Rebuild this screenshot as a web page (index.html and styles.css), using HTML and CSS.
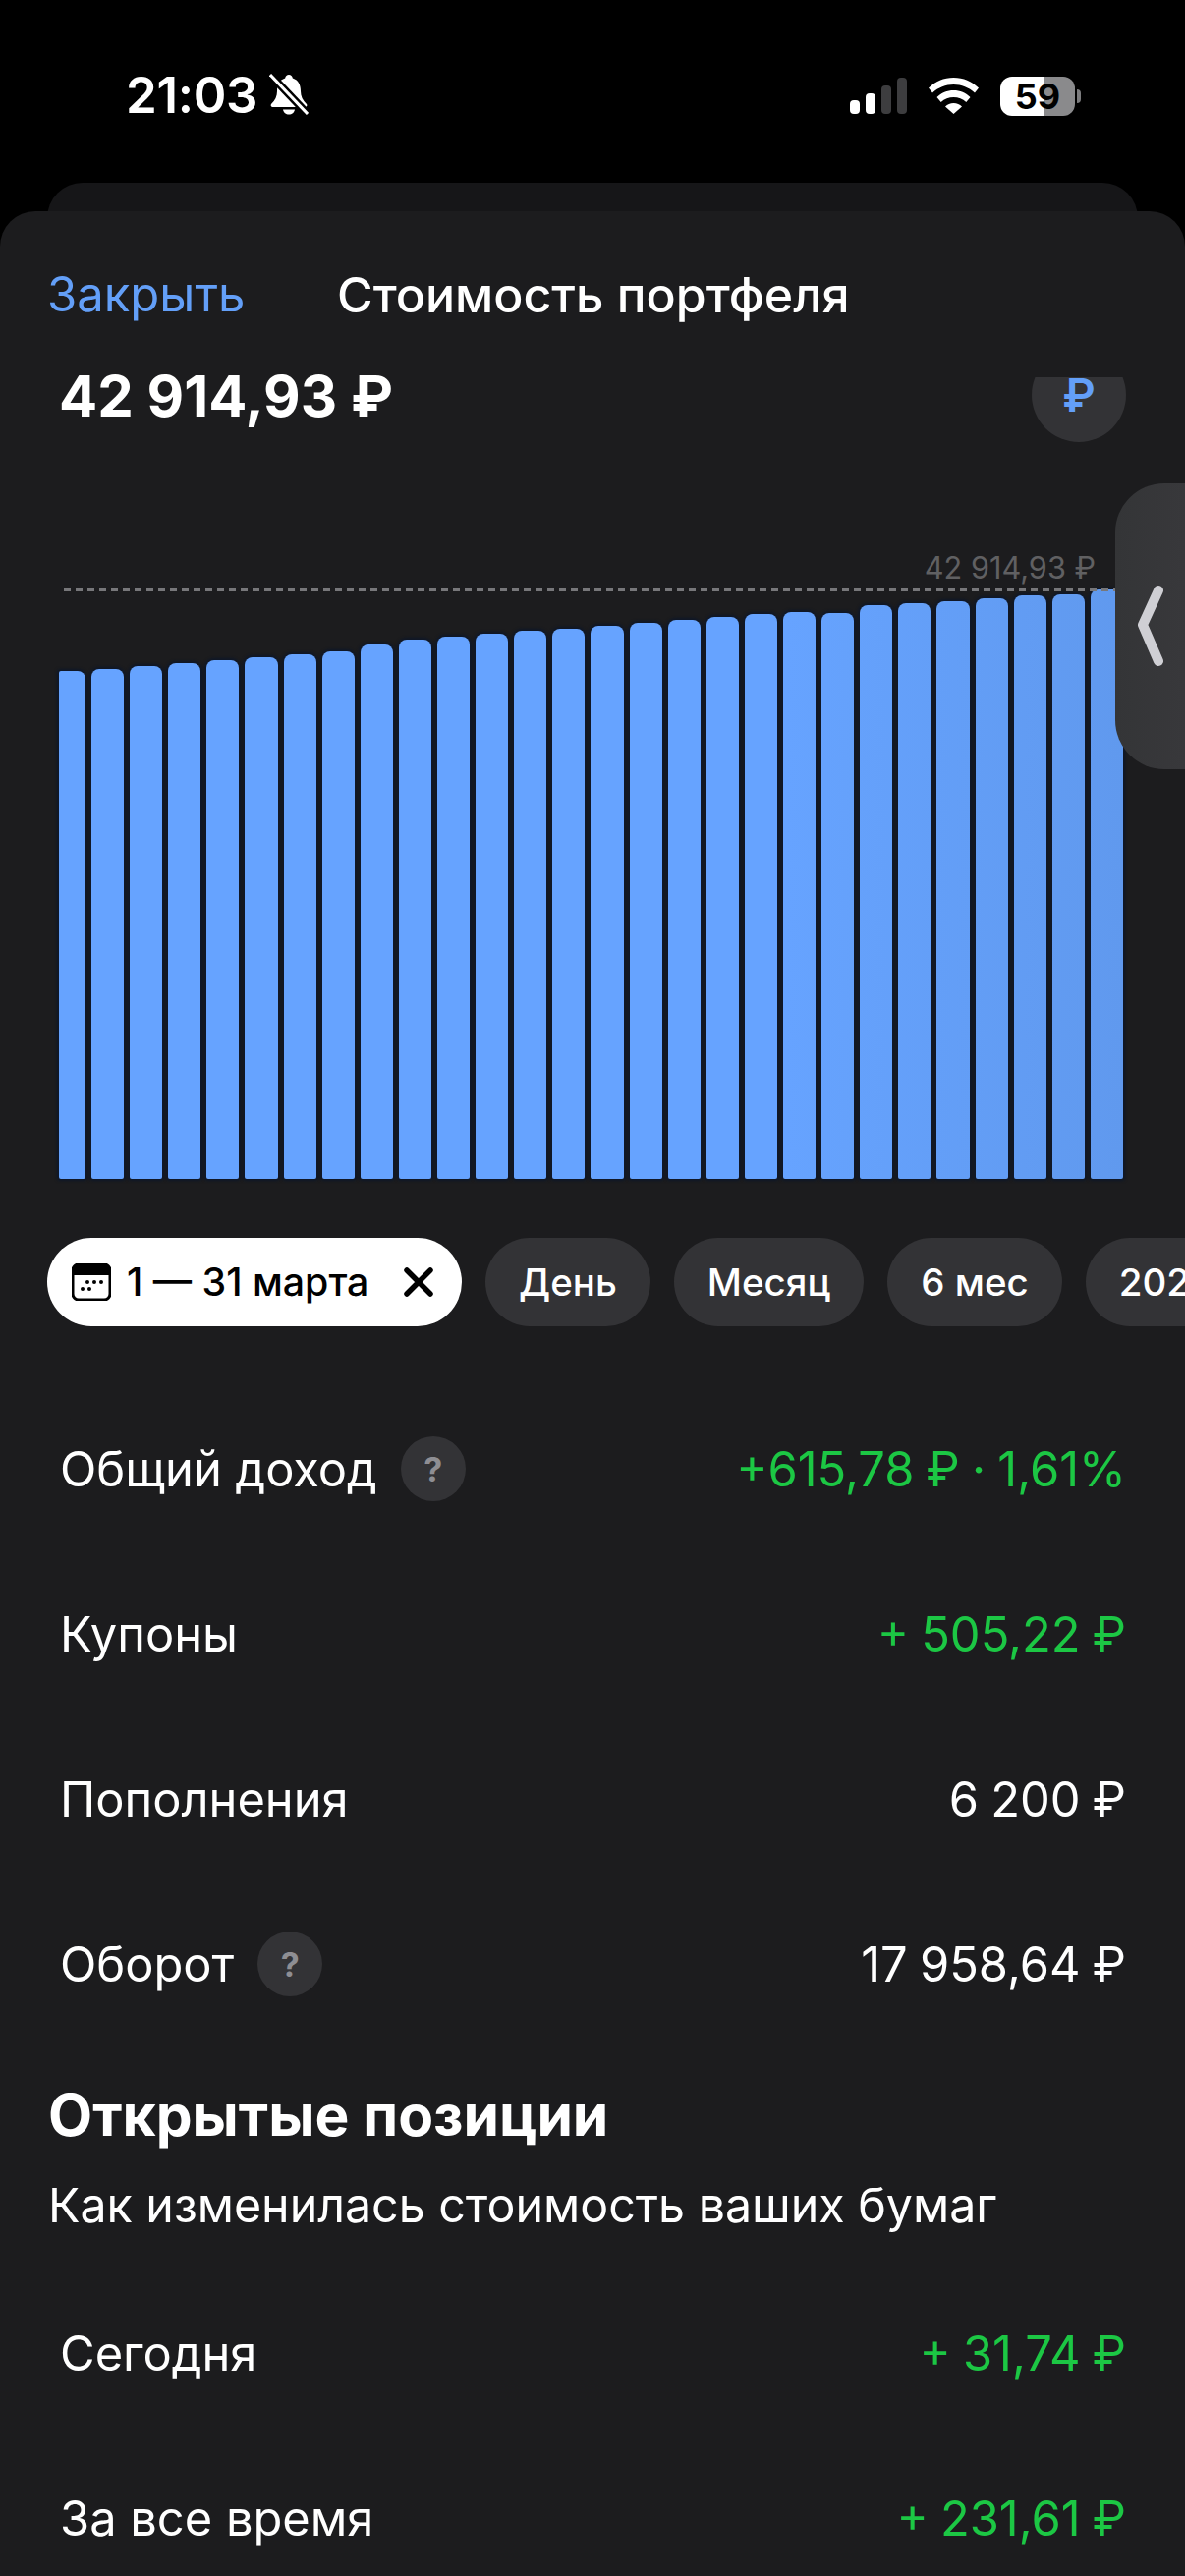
FILE: index.html
```html
<!DOCTYPE html>
<html lang="ru">
<head>
<meta charset="utf-8">
<title>Стоимость портфеля</title>
<link rel="stylesheet" href="styles.css">
</head>
<body>
<div class="phone">
  <div class="status">
    <div class="status-left">
      <span class="clock">21:03</span>
      <svg class="bell" viewBox="0 0 40 42"><path d="M20 1c-2 0-3.500 1.500-3.800 3.500C10 6.500 8 12 8 18c0 5-2 9-6 13-1 1.500 0 3 1.500 3h33c1.500 0 2.500-1.500 1.500-3-4-4-6-8-6-13 0-6-2-11.500-8.200-13.500C23.500 2.500 22 1 20 1z" fill="#fff"/><path d="M14 36.500h12c-.5 3-3 5-6 5s-5.500-2-6-5z" fill="#fff"/><path d="M1 1l38 40" stroke="#000" stroke-width="8"/><path d="M1 1l38 40" stroke="#fff" stroke-width="3"/></svg>
    </div>
    <div class="status-right">
      <div class="signal">
        <i class="sig s1"></i><i class="sig s2"></i><i class="sig s3"></i><i class="sig s4"></i>
      </div>
      <svg class="wifi" viewBox="0 0 51 37"><path d="M25.500 0C15.500 0 7 4 0 10.500l4 5C10 10 17.500 7 25.500 7s15.500 3 21.500 8.500l4-5C44 4 35.500 0 25.500 0z" fill="#fff"/><path d="M25.500 13c-6.500 0-12.500 2.500-17 7l4.200 5c3.500-3.300 8-5 12.800-5s9.300 1.700 12.800 5l4.200-5c-4.500-4.500-10.500-7-17-7z" fill="#fff"/><path d="M25.500 26c-3.300 0-6.300 1.300-8.500 3.500l8.500 7.500 8.500-7.500C31.800 27.300 28.800 26 25.500 26z" fill="#fff"/></svg>
      <div class="battery"><div class="battery-body"><span class="battery-text">59</span></div><i class="battery-nub"></i></div>
    </div>
  </div>

  <div class="sheet-back"></div>
  <div class="sheet">
    <header class="head">
      <span class="close">Закрыть</span>
      <span class="head-title">Стоимость портфеля</span>
    </header>
    <div class="scroll">
      <div class="total-row">
        <span class="total">42 914,93 ₽</span>
        <span class="currency-clip"><span class="currency">₽</span></span>
      </div>
      <div class="chart">
        <div class="max-label">42 914,93 ₽</div>
        <div class="max-line"></div>
        <div class="bars">
          <i class="bar" style="height:517px"></i><i class="bar" style="height:519px"></i><i class="bar" style="height:522px"></i><i class="bar" style="height:525px"></i><i class="bar" style="height:528px"></i><i class="bar" style="height:531px"></i><i class="bar" style="height:534px"></i><i class="bar" style="height:537px"></i><i class="bar" style="height:544px"></i><i class="bar" style="height:549px"></i><i class="bar" style="height:552px"></i><i class="bar" style="height:555px"></i><i class="bar" style="height:558px"></i><i class="bar" style="height:560px"></i><i class="bar" style="height:563px"></i><i class="bar" style="height:566px"></i><i class="bar" style="height:569px"></i><i class="bar" style="height:572px"></i><i class="bar" style="height:575px"></i><i class="bar" style="height:577px"></i><i class="bar" style="height:576px"></i><i class="bar" style="height:584px"></i><i class="bar" style="height:586px"></i><i class="bar" style="height:588px"></i><i class="bar" style="height:591px"></i><i class="bar" style="height:594px"></i><i class="bar" style="height:595px"></i><i class="bar" style="height:600px"></i>
        </div>
      </div>
      <div class="chips">
        <div class="chip chip-active">
          <svg class="cal" viewBox="0 0 40 38"><path d="M7 1h26a6 6 0 0 1 6 6v24a6 6 0 0 1-6 6H7a6 6 0 0 1-6-6V7a6 6 0 0 1 6-6z" fill="none" stroke="#000" stroke-width="3"/><path d="M7 1h26a6 6 0 0 1 6 6v5H1V7a6 6 0 0 1 6-6z" fill="#000"/><g fill="#000"><circle cx="16" cy="19" r="2"/><circle cx="23" cy="19" r="2"/><circle cx="30" cy="19" r="2"/><circle cx="11" cy="26" r="2"/><circle cx="18" cy="26" r="2"/></g></svg>
          <span class="chip-date">1 — 31 марта</span>
          <svg class="cross" viewBox="0 0 30 30"><path d="M3 3l24 24M27 3L3 27" stroke="#000" stroke-width="5.500" stroke-linecap="round"/></svg>
        </div>
        <div class="chip">День</div>
        <div class="chip">Месяц</div>
        <div class="chip">6 мес</div>
        <div class="chip">2024</div>
      </div>
      <div class="rows">
        <div class="row"><span class="label">Общий доход<i class="help">?</i></span><span class="val green">+615,78 ₽ · 1,61%</span></div>
        <div class="row"><span class="label">Купоны</span><span class="val green">+ 505,22 ₽</span></div>
        <div class="row"><span class="label">Пополнения</span><span class="val">6 200 ₽</span></div>
        <div class="row"><span class="label">Оборот<i class="help">?</i></span><span class="val">17 958,64 ₽</span></div>
      </div>
      <section class="positions">
        <h2 class="pos-title">Открытые позиции</h2>
        <p class="pos-sub">Как изменилась стоимость ваших бумаг</p>
      </section>
      <div class="rows rows-second">
        <div class="row"><span class="label">Сегодня</span><span class="val green">+ 31,74 ₽</span></div>
        <div class="row"><span class="label">За все время</span><span class="val green">+ 231,61 ₽</span></div>
      </div>
    </div>
    <div class="handle">
      <svg class="chevron" viewBox="0 0 28 84"><path d="M22 6L6 41l16 37" fill="none" stroke="#cfcfd4" stroke-width="10" stroke-linecap="round" stroke-linejoin="round"/></svg>
    </div>
  </div>
</div>
</body>
</html>
```

FILE: styles.css
```css
* { box-sizing: border-box; }
html, body { margin: 0; padding: 0; background: #000; }
body { font-family: Inter, "Noto Sans", "Liberation Sans", sans-serif; color: #fff; }
.phone { width: 1206px; height: 2622px; overflow: hidden; background: #000; display: flex; flex-direction: column; }

.status { height: 186px; flex: none; display: flex; justify-content: space-between; padding: 72px 106px 0 128px; align-items: flex-start; }
.status-left { display: flex; align-items: center; gap: 12px; height: 50px; }
.clock { font-size: 51px; font-weight: 600; line-height: 50px; letter-spacing: -0.3px; }
.bell { width: 40px; height: 42px; margin-top: -2px; }
.status-right { display: flex; align-items: flex-end; height: 46px; }
.signal { display: flex; align-items: flex-end; gap: 6px; height: 37px; margin-bottom: 2px; }
.sig { display: block; width: 10px; border-radius: 4px; background: #fff; }
.s1 { height: 14px; }
.s2 { height: 21px; }
.s3 { height: 29px; background: #3d3d3f; }
.s4 { height: 37px; background: #3d3d3f; }
.wifi { width: 51px; height: 37px; margin: 0 22px 2px; }
.battery { display: flex; align-items: center; }
.battery-body { width: 76px; height: 40px; border-radius: 12px; background: linear-gradient(90deg, #fff 58%, #8a8a8c 58%); display: flex; align-items: center; justify-content: center; }
.battery-text { color: #000; font-size: 36px; font-weight: 700; line-height: 40px; }
.battery-nub { display: block; width: 4px; height: 14px; margin-left: 2px; border-radius: 0 4px 4px 0; background: #7c7c7e; }

.sheet-back { height: 60px; flex: none; margin: 0 48px -31px; background: #161618; border-radius: 36px 36px 0 0; }
.sheet { position: relative; flex: 1; min-height: 0; background: #1c1c1e; border-radius: 36px 36px 0 0; z-index: 1; display: flex; flex-direction: column; }

.head { height: 169px; flex: none; display: flex; align-items: flex-start; padding: 50px 0 0 48px; }
.close { font-size: 49px; line-height: 70px; color: #639ff8; width: 295px; }
.head-title { font-size: 50px; line-height: 70px; font-weight: 500; }

.scroll { flex: 1; min-height: 0; }
.total-row { display: flex; justify-content: space-between; align-items: flex-start; padding: 0 60px; height: 216px; }
.total { font-size: 58px; line-height: 38px; font-weight: 700; }
.currency-clip { display: block; width: 96px; height: 66px; overflow: hidden; }
.currency { width: 96px; height: 96px; margin-top: -30px; border-radius: 50%; background: #333336; color: #639ff8; font-size: 46px; line-height: 36px; font-weight: 600; display: flex; align-items: center; justify-content: center; }

.chart { position: relative; height: 600px; margin: 0 63px 0 60px; }
.max-label { position: absolute; right: 28px; top: -40px; font-size: 30.7px; line-height: 36px; color: #606062; }
.max-line { position: absolute; left: 5px; right: 0; top: -1px; height: 3px; background: repeating-linear-gradient(90deg, #77777a 0 7px, transparent 7px 12px); }
.bars { height: 100%; display: flex; align-items: flex-end; gap: 6px; }
.bar { display: block; flex: 1 1 0; border-radius: 8px 8px 2px 2px; background: linear-gradient(90deg, #66a3ff 0, #66a3ff 800px, #6099ee 1143px) fixed; box-shadow: 0 0 3px 2px rgba(10, 22, 44, .75); }
.bar:first-child { flex: 0 0 27px; border-top-left-radius: 2px; }

.chips { display: flex; gap: 24px; margin-top: 60px; padding-left: 48px; width: 1206px; overflow: hidden; }
.chip { flex: none; height: 90px; border-radius: 45px; background: #333336; padding: 0 34px; font-size: 38.5px; font-weight: 500; line-height: 90px; color: #fff; white-space: nowrap; }
.chip-active { background: #fff; color: #000; display: flex; align-items: center; padding: 0 29px 0 25px; width: 422px; font-size: 39.3px; }
.cal { width: 40px; height: 38px; flex: none; }
.chip-date { margin-left: 16px; flex: 1; }
.cross { width: 30px; height: 30px; flex: none; }

.rows { padding: 61px 60px 0 61px; }
.row { height: 168px; display: flex; justify-content: space-between; align-items: center; font-size: 48.8px; }
.label { display: flex; align-items: center; }
.val { word-spacing: -1.5px; }
.help { width: 66px; height: 66px; margin-left: 24px; border-radius: 50%; background: #333336; color: #8e8e93; font-style: normal; font-size: 34px; font-weight: 700; display: flex; align-items: center; justify-content: center; }
.green { color: #1cc744; }

.positions { padding: 0 49px; margin-top: 35px; }
.pos-title { margin: 0; font-size: 58.6px; line-height: 70px; font-weight: 700; }
.pos-sub { margin: 22px 0 0; font-size: 48.3px; line-height: 70px; }
.rows-second { padding-top: 31px; }

.handle { position: absolute; right: 0; top: 277px; width: 71px; height: 291px; border-radius: 50px 0 0 50px; background: linear-gradient(90deg, #343537, #38383b); display: flex; align-items: center; padding-left: 22px; }
.chevron { width: 28px; height: 84px; margin-top: -2px; }
```
